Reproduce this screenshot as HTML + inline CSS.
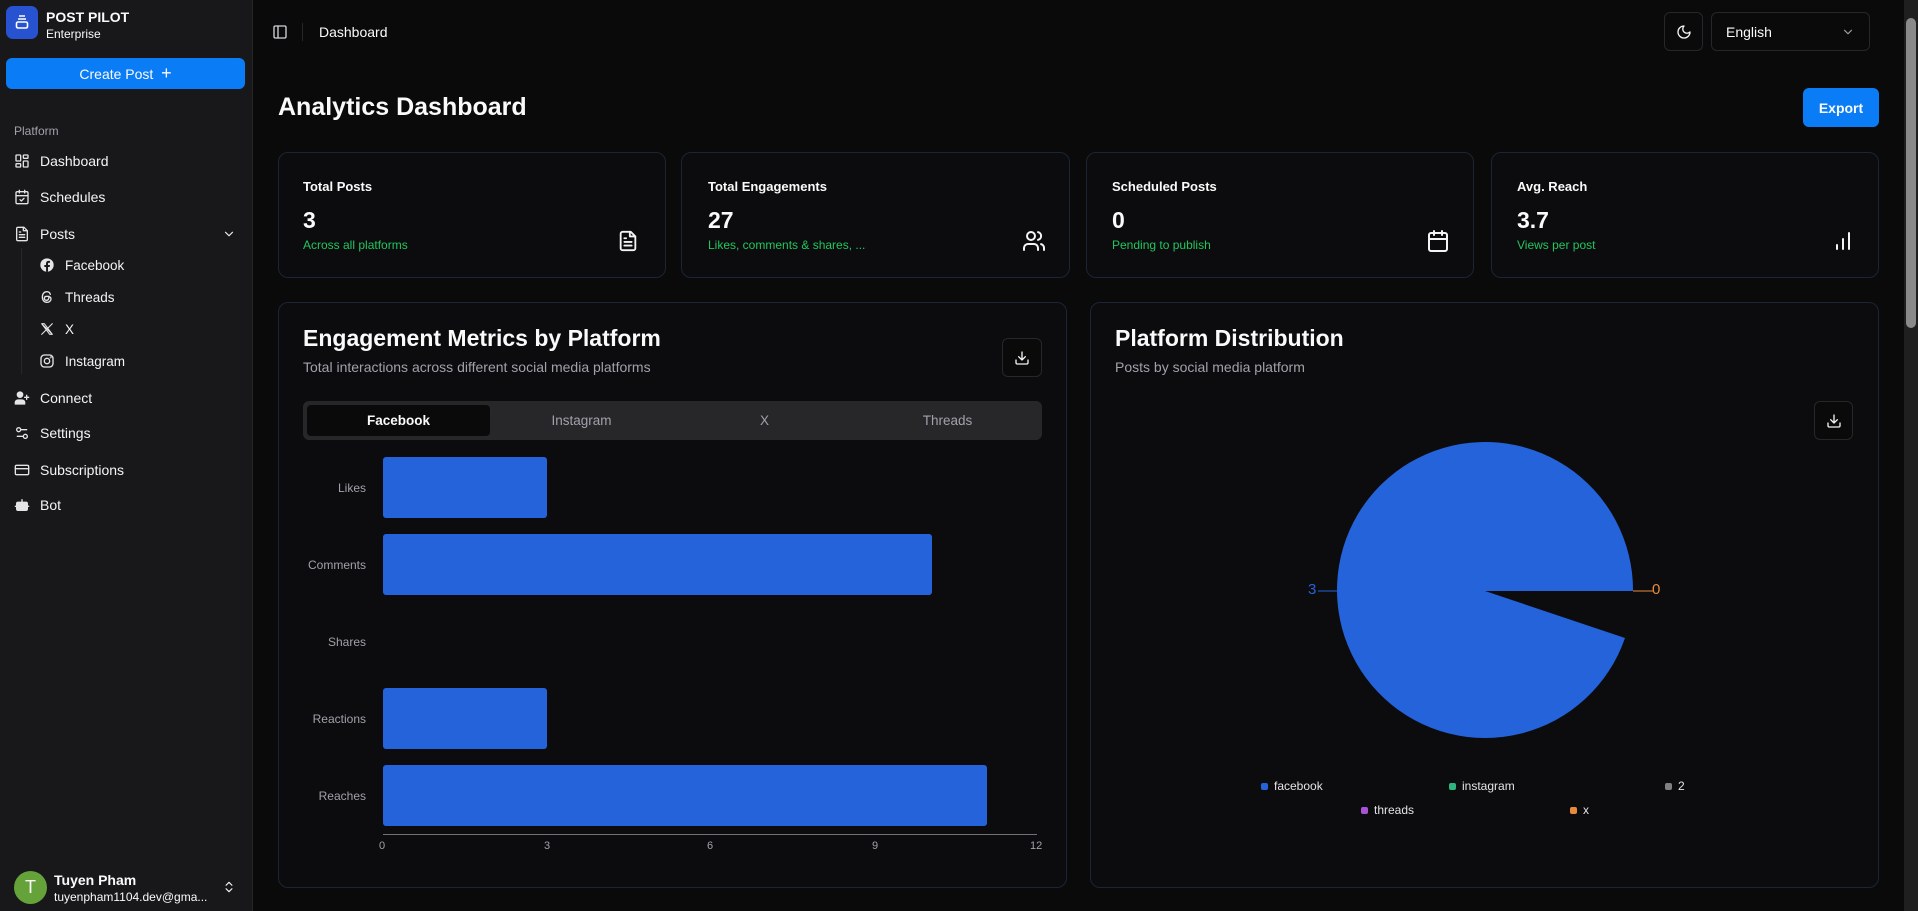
<!DOCTYPE html>
<html><head><meta charset="utf-8"><style>
*{box-sizing:border-box;margin:0;padding:0}
body{width:1918px;height:911px;overflow:hidden;background:#0a0a0b;font-family:"Liberation Sans",sans-serif;color:#fafafa;position:relative}
.a{position:absolute}
.side{left:0;top:0;width:253px;height:911px;background:#18181b;border-right:1px solid #27272a}
.nav{left:14px;font-size:14px;color:#f4f4f5;display:flex;align-items:center;gap:10px}
.nav svg{width:16px;height:16px;stroke:#e4e4e7;fill:none;stroke-width:2;stroke-linecap:round;stroke-linejoin:round}
.sub{left:39px}
.card{border:1px solid #1a2536;border-radius:10px;background:#0c0c0e}
.lbl{font-size:13px;font-weight:bold}
.val{font-size:23px;font-weight:bold}
.grn{font-size:12px;color:#22c55e}
.ic{stroke:#f4f4f5;fill:none;stroke-width:2;stroke-linecap:round;stroke-linejoin:round}
.btn{border:1px solid #27272a;border-radius:6px;background:#0a0a0b;display:flex;align-items:center;justify-content:center}
.ylab{font-size:12px;color:#a1a1aa;text-align:right;width:100px}
.bar{background:#2563db;border-radius:3px;left:383px;height:61px}
.leg{font-size:12px;color:#e4e4e7;display:flex;align-items:center;gap:6px}
.leg i{width:7px;height:7px;border-radius:2px;display:inline-block}
</style></head><body>
<div class="a side"></div>
<div class="a" style="left:6px;top:6px;width:32px;height:33px;background:#2853d0;border-radius:7px"></div>
<svg class="a" style="left:14px;top:14px" width="16" height="16" viewBox="0 0 16 16" fill="none" stroke="#fff" stroke-width="1.6"><path d="M5 2h6M4 5h8"/><rect x="2.5" y="8" width="11" height="6" rx="1.5"/></svg>
<div class="a" style="left:46px;top:9px;font-size:14px;font-weight:bold">POST PILOT</div>
<div class="a" style="left:46px;top:27px;font-size:12px">Enterprise</div>
<div class="a" style="left:6px;top:58px;width:239px;height:31px;background:#0a7cf6;border-radius:6px;font-size:14px;display:flex;align-items:center;justify-content:center">Create Post&nbsp;&nbsp;<span style="font-size:18px">+</span></div>
<div class="a" style="left:14px;top:124px;font-size:12px;color:#a1a1aa">Platform</div>
<div class="a nav" style="top:153px"><svg viewBox="0 0 24 24"><rect x="3" y="3" width="7" height="9" rx="1"/><rect x="14" y="3" width="7" height="5" rx="1"/><rect x="14" y="12" width="7" height="9" rx="1"/><rect x="3" y="16" width="7" height="5" rx="1"/></svg>Dashboard</div>
<div class="a nav" style="top:189px"><svg viewBox="0 0 24 24"><rect x="3" y="4" width="18" height="18" rx="2"/><path d="M16 2v4M8 2v4M3 10h18M9 16l2 2 4-4"/></svg>Schedules</div>
<div class="a nav" style="top:226px"><svg viewBox="0 0 24 24"><path d="M15 2H6a2 2 0 0 0-2 2v16a2 2 0 0 0 2 2h12a2 2 0 0 0 2-2V7z"/><path d="M14 2v5h5M16 13H8M16 17H8M10 9H8"/></svg>Posts</div>
<svg class="a ic" style="left:222px;top:227px" width="14" height="14" viewBox="0 0 24 24"><path d="M6 9l6 6 6-6"/></svg>
<div class="a" style="left:21px;top:248px;width:1px;height:126px;background:#27272a"></div>
<div class="a nav sub" style="top:257px;font-size:13.5px"><svg viewBox="0 0 24 24" style="fill:#e4e4e7;stroke:none"><circle cx="12" cy="12" r="10"/><path d="M13.5 22v-7h2.5l.4-3h-2.9V10c0-.8.3-1.4 1.5-1.4h1.5V6c-.3 0-1.2-.1-2.2-.1-2.2 0-3.7 1.3-3.7 3.8V12H8v3h2.6v7z" fill="#18181b"/></svg>Facebook</div>
<div class="a nav sub" style="top:289px;font-size:13.5px"><svg viewBox="0 0 24 24"><path d="M17 8c-1-3-3-4-5-4-4 0-7 3-7 8s3 8 7 8c3 0 6-2 6-5s-3-4-6-4-4 1-4 3 2 3 3 3c3 0 4-3 4-6"/></svg>Threads</div>
<div class="a nav sub" style="top:321px;font-size:13.5px"><svg viewBox="0 0 24 24" style="stroke-width:1.6"><path d="M4 4l16 16M20 4L4 20M4 4h4l12 16h-4z"/></svg>X</div>
<div class="a nav sub" style="top:353px;font-size:13.5px"><svg viewBox="0 0 24 24"><rect x="3" y="3" width="18" height="18" rx="5"/><circle cx="12" cy="12" r="4"/><circle cx="17.5" cy="6.5" r=".5"/></svg>Instagram</div>
<div class="a nav" style="top:390px"><svg viewBox="0 0 24 24" style="fill:#e4e4e7"><circle cx="9" cy="7" r="4"/><path d="M2 21v-2a4 4 0 0 1 4-4h6a4 4 0 0 1 4 4v2z"/><path d="M19 8v6M22 11h-6" style="fill:none"/></svg>Connect</div>
<div class="a nav" style="top:425px"><svg viewBox="0 0 24 24"><path d="M14 17H5M19 7h-9"/><circle cx="17" cy="17" r="3"/><circle cx="7" cy="7" r="3"/></svg>Settings</div>
<div class="a nav" style="top:462px"><svg viewBox="0 0 24 24"><rect x="2" y="5" width="20" height="14" rx="2"/><path d="M2 10h20"/></svg>Subscriptions</div>
<div class="a nav" style="top:497px"><svg viewBox="0 0 24 24" style="fill:#e4e4e7"><rect x="4" y="8" width="16" height="12" rx="2"/><path d="M12 8V4M2 14h2M20 14h2" style="fill:none"/><circle cx="9" cy="13" r="1" fill="#18181b"/><circle cx="15" cy="13" r="1" fill="#18181b"/></svg>Bot</div>
<div class="a" style="left:14px;top:871px;width:33px;height:33px;border-radius:50%;background:#65a33a;font-size:18px;display:flex;align-items:center;justify-content:center">T</div>
<div class="a" style="left:54px;top:872px;font-size:14px;font-weight:bold">Tuyen Pham</div>
<div class="a" style="left:54px;top:890px;font-size:12px">tuyenpham1104.dev@gma...</div>
<svg class="a ic" style="left:222px;top:879px" width="14" height="16" viewBox="0 0 24 24"><path d="M7 9l5-5 5 5M7 15l5 5 5-5"/></svg>

<svg class="a ic" style="left:272px;top:24px;stroke:#d4d4d8" width="16" height="16" viewBox="0 0 24 24"><rect x="3" y="3" width="18" height="18" rx="2"/><path d="M9 3v18"/></svg>
<div class="a" style="left:302px;top:23px;width:1px;height:18px;background:#27272a"></div>
<div class="a" style="left:319px;top:24px;font-size:14px">Dashboard</div>
<div class="a btn" style="left:1664px;top:12px;width:39px;height:39px"><svg class="ic" width="16" height="16" viewBox="0 0 24 24"><path d="M12 3a6 6 0 0 0 9 9 9 9 0 1 1-9-9z"/></svg></div>
<div class="a btn" style="left:1711px;top:12px;width:159px;height:39px;justify-content:space-between;padding:0 14px;font-size:14px">English<svg class="ic" style="stroke:#a1a1aa" width="14" height="14" viewBox="0 0 24 24"><path d="M6 9l6 6 6-6"/></svg></div>
<div class="a" style="left:278px;top:93px;font-size:25px;font-weight:bold">Analytics Dashboard</div>
<div class="a" style="left:1803px;top:88px;width:76px;height:39px;background:#0a7cf6;border-radius:6px;font-size:14px;font-weight:bold;display:flex;align-items:center;justify-content:center">Export</div>

<div class="a card" style="left:278px;top:152px;width:388px;height:126px"></div>
<div class="a card" style="left:681px;top:152px;width:389px;height:126px"></div>
<div class="a card" style="left:1086px;top:152px;width:388px;height:126px"></div>
<div class="a card" style="left:1491px;top:152px;width:388px;height:126px"></div>
<div class="a lbl" style="left:303px;top:179px">Total Posts</div><div class="a val" style="left:303px;top:207px">3</div><div class="a grn" style="left:303px;top:238px">Across all platforms</div>
<div class="a lbl" style="left:708px;top:179px">Total Engagements</div><div class="a val" style="left:708px;top:207px">27</div><div class="a grn" style="left:708px;top:238px">Likes, comments &amp; shares, ...</div>
<div class="a lbl" style="left:1112px;top:179px">Scheduled Posts</div><div class="a val" style="left:1112px;top:207px">0</div><div class="a grn" style="left:1112px;top:238px">Pending to publish</div>
<div class="a lbl" style="left:1517px;top:179px">Avg. Reach</div><div class="a val" style="left:1517px;top:207px">3.7</div><div class="a grn" style="left:1517px;top:238px">Views per post</div>
<svg class="a ic" style="left:617px;top:229px" width="22" height="24" viewBox="0 0 24 24"><path d="M15 2H6a2 2 0 0 0-2 2v16a2 2 0 0 0 2 2h12a2 2 0 0 0 2-2V7z"/><path d="M14 2v5h5M16 13H8M16 17H8M10 9H8"/></svg>
<svg class="a ic" style="left:1022px;top:229px" width="24" height="24" viewBox="0 0 24 24"><path d="M16 21v-2a4 4 0 0 0-4-4H6a4 4 0 0 0-4 4v2"/><circle cx="9" cy="7" r="4"/><path d="M22 21v-2a4 4 0 0 0-3-3.9M16 3.1a4 4 0 0 1 0 7.8"/></svg>
<svg class="a ic" style="left:1426px;top:229px" width="24" height="24" viewBox="0 0 24 24"><rect x="3" y="4" width="18" height="18" rx="2"/><path d="M16 2v4M8 2v4M3 10h18"/></svg>
<svg class="a ic" style="left:1831px;top:229px" width="24" height="24" viewBox="0 0 24 24"><path d="M6 20v-4M12 20V10M18 20V4"/></svg>

<div class="a card" style="left:278px;top:302px;width:789px;height:586px"></div>
<div class="a card" style="left:1090px;top:302px;width:789px;height:586px"></div>
<div class="a" style="left:303px;top:325px;font-size:23px;font-weight:bold">Engagement Metrics by Platform</div>
<div class="a" style="left:303px;top:359px;font-size:14px;color:#a1a1aa">Total interactions across different social media platforms</div>
<div class="a btn" style="left:1002px;top:338px;width:40px;height:39px"><svg class="ic" width="16" height="16" viewBox="0 0 24 24"><path d="M21 15v4a2 2 0 0 1-2 2H5a2 2 0 0 1-2-2v-4M7 10l5 5 5-5M12 15V3"/></svg></div>
<div class="a" style="left:303px;top:401px;width:739px;height:39px;background:#27272a;border-radius:6px"></div>
<div class="a" style="left:307px;top:405px;width:183px;height:31px;background:#0a0a0b;border-radius:4px"></div>
<div class="a" style="left:307px;top:413px;width:183px;text-align:center;font-size:13.5px;font-weight:bold">Facebook</div>
<div class="a" style="left:490px;top:413px;width:183px;text-align:center;font-size:13.5px;color:#a1a1aa">Instagram</div>
<div class="a" style="left:673px;top:413px;width:183px;text-align:center;font-size:13.5px;color:#a1a1aa">X</div>
<div class="a" style="left:856px;top:413px;width:183px;text-align:center;font-size:13.5px;color:#a1a1aa">Threads</div>
<div class="a ylab" style="left:266px;top:481px">Likes</div>
<div class="a ylab" style="left:266px;top:558px">Comments</div>
<div class="a ylab" style="left:266px;top:635px">Shares</div>
<div class="a ylab" style="left:266px;top:712px">Reactions</div>
<div class="a ylab" style="left:266px;top:789px">Reaches</div>
<div class="a bar" style="top:457px;width:164px"></div>
<div class="a bar" style="top:534px;width:549px"></div>
<div class="a bar" style="top:688px;width:164px"></div>
<div class="a bar" style="top:765px;width:604px"></div>
<div class="a" style="left:383px;top:834px;width:654px;height:1px;background:#71717a"></div>
<div class="a" style="left:379px;top:840px;font-size:11px;color:#a1a1aa">0</div>
<div class="a" style="left:544px;top:840px;font-size:11px;color:#a1a1aa">3</div>
<div class="a" style="left:707px;top:840px;font-size:11px;color:#a1a1aa">6</div>
<div class="a" style="left:872px;top:840px;font-size:11px;color:#a1a1aa">9</div>
<div class="a" style="left:1030px;top:840px;font-size:11px;color:#a1a1aa">12</div>

<div class="a" style="left:1115px;top:325px;font-size:23px;font-weight:bold">Platform Distribution</div>
<div class="a" style="left:1115px;top:359px;font-size:14px;color:#a1a1aa">Posts by social media platform</div>
<div class="a btn" style="left:1814px;top:401px;width:39px;height:39px"><svg class="ic" width="16" height="16" viewBox="0 0 24 24"><path d="M21 15v4a2 2 0 0 1-2 2H5a2 2 0 0 1-2-2v-4M7 10l5 5 5-5M12 15V3"/></svg></div>
<svg class="a" style="left:0;top:0" width="1918" height="911"><path d="M1485 591 L1633 591 A148 148 0 1 0 1625 638 Z" fill="#2563db"/><path d="M1318 591 H1338" stroke="#2563db"/><path d="M1633 591 H1653" stroke="#e88a3a"/><text x="1308" y="590" font-size="15" fill="#2563db" font-family="Liberation Sans" dominant-baseline="middle">3</text><text x="1652" y="590" font-size="15" fill="#e88a3a" font-family="Liberation Sans" dominant-baseline="middle">0</text></svg>
<div class="a leg" style="left:1261px;top:779px"><i style="background:#2563db"></i>facebook</div>
<div class="a leg" style="left:1449px;top:779px"><i style="background:#2fb37f"></i>instagram</div>
<div class="a leg" style="left:1665px;top:779px"><i style="background:#808080"></i>2</div>
<div class="a leg" style="left:1361px;top:803px"><i style="background:#a853d6"></i>threads</div>
<div class="a leg" style="left:1570px;top:803px"><i style="background:#e88a3a"></i>x</div>
<div class="a" style="left:1904px;top:0;width:14px;height:911px;background:#1f1f1f"></div>
<div class="a" style="left:1906px;top:18px;width:10px;height:310px;background:#8a8a8a;border-radius:5px"></div>
</body></html>
